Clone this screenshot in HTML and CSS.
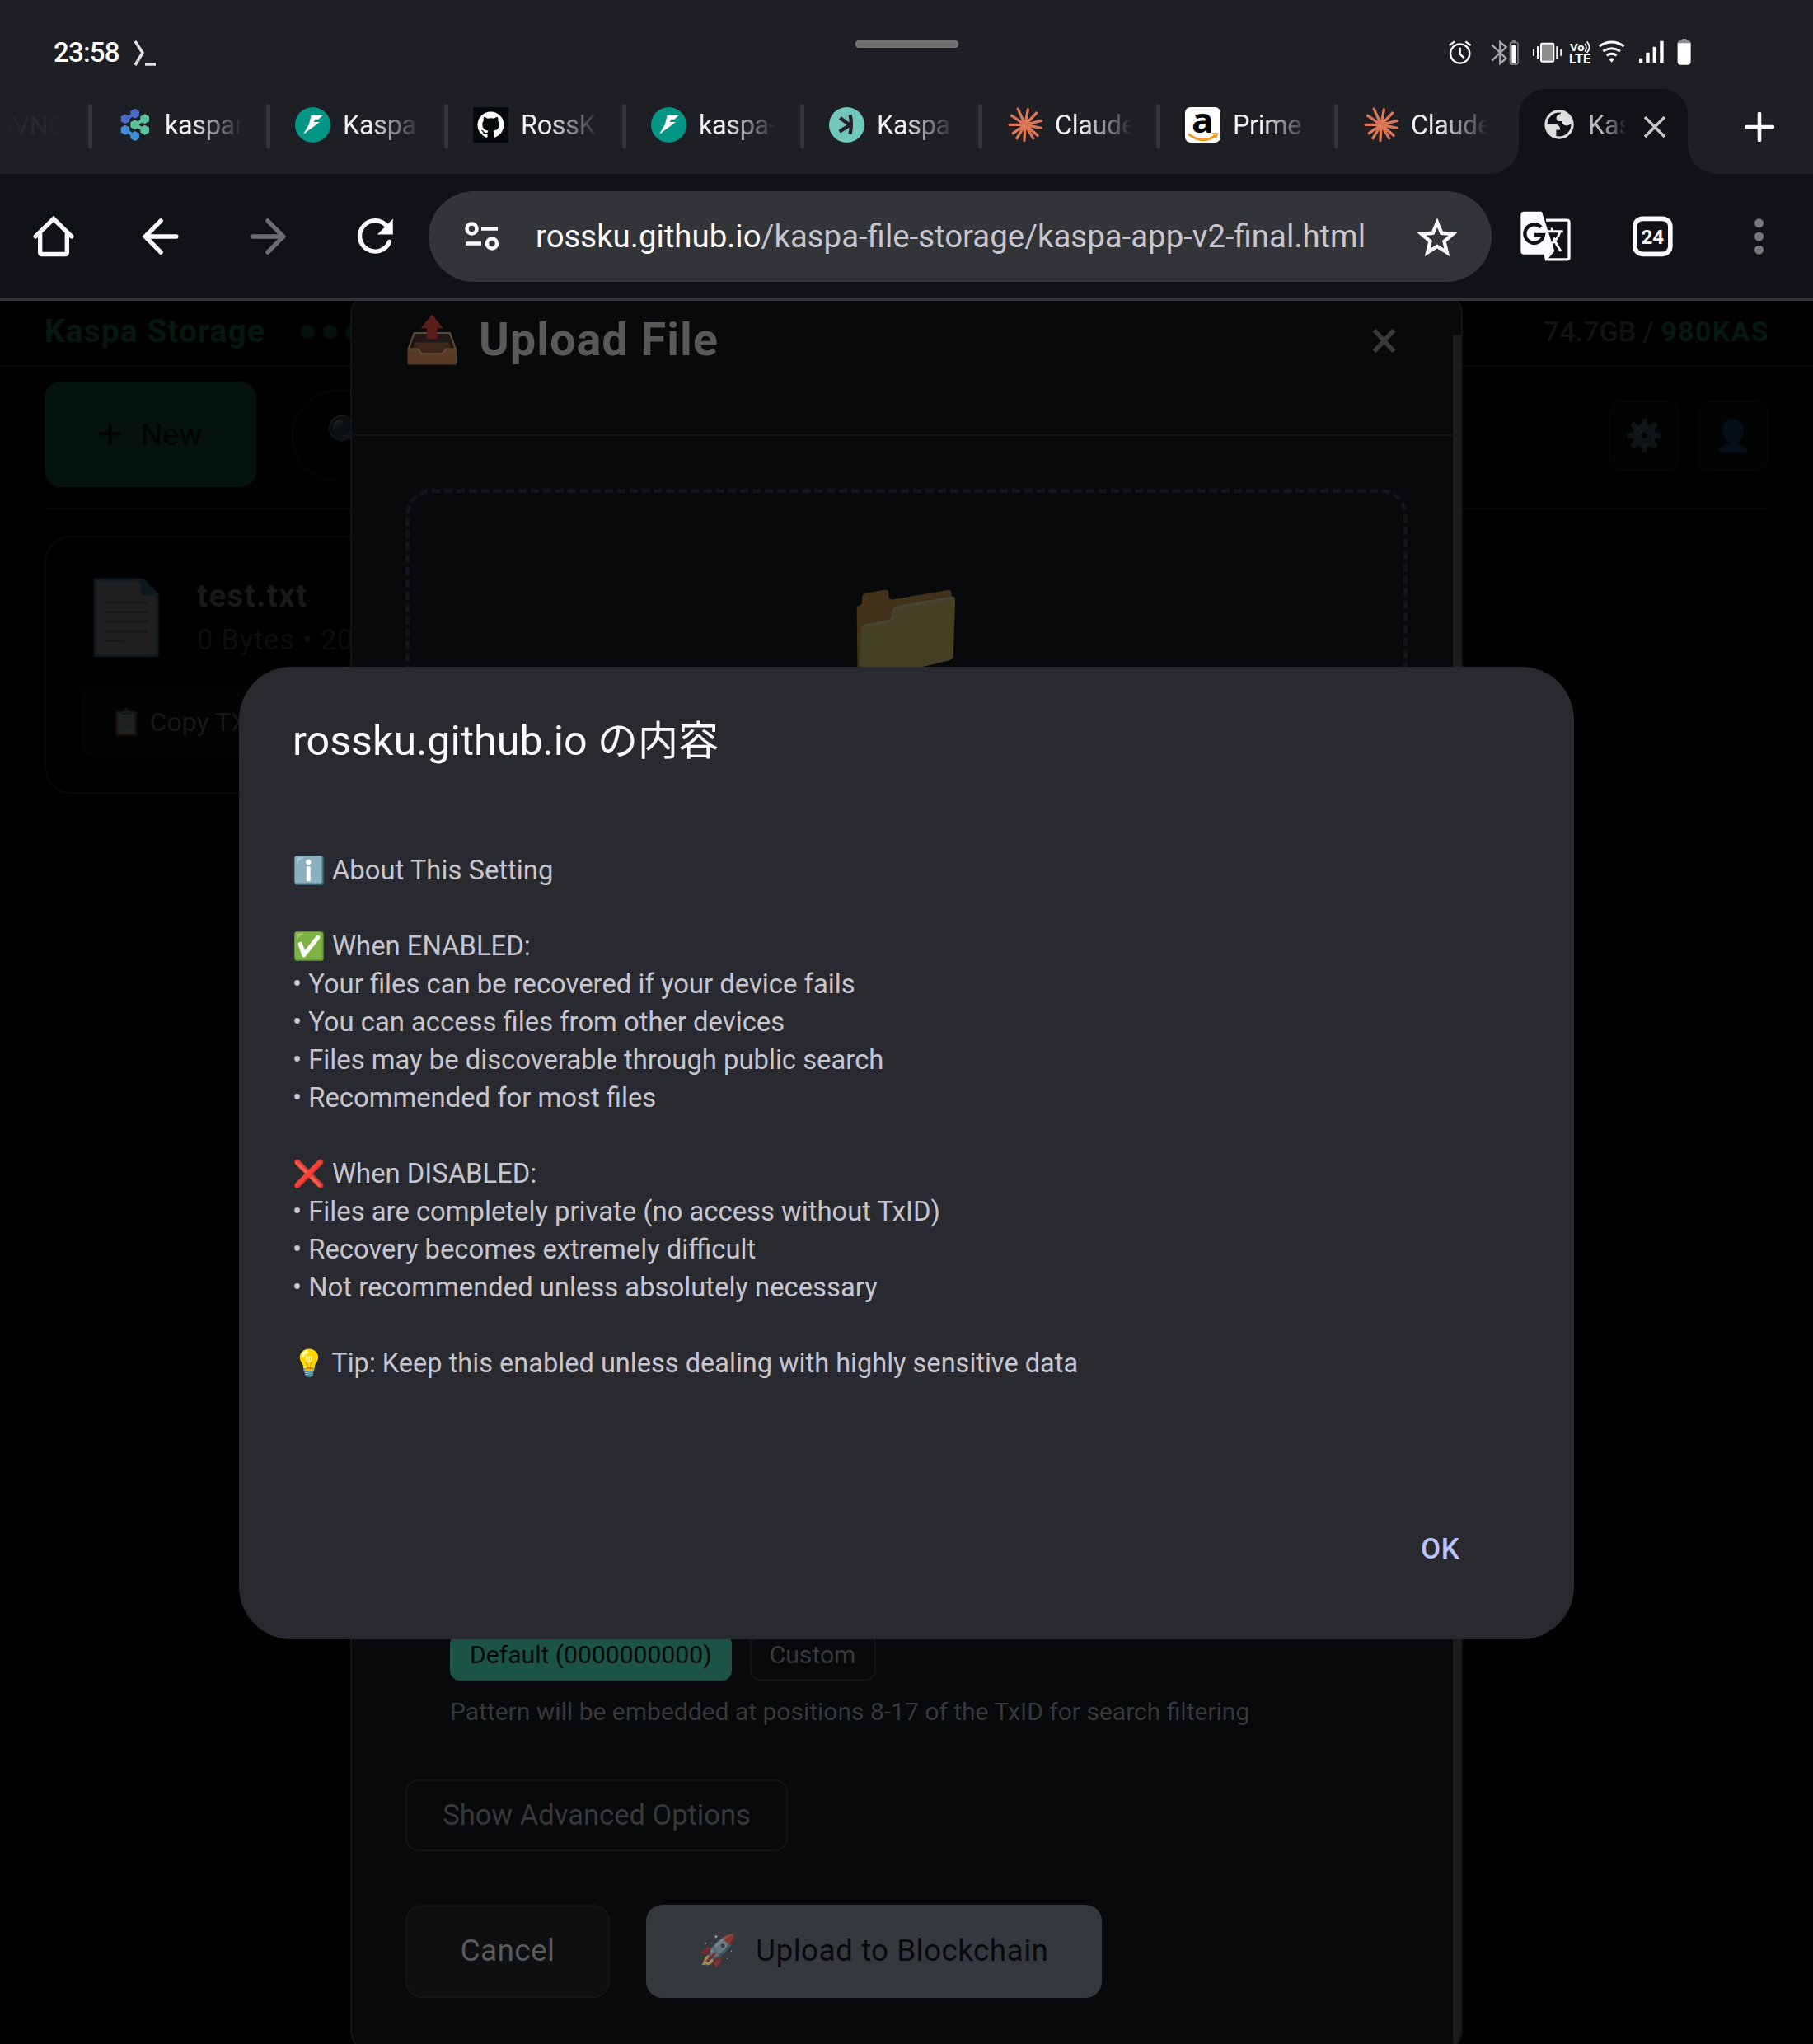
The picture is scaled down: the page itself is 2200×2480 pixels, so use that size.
FILE: index.html
```html
<!DOCTYPE html>
<html lang="ja">
<head>
<meta charset="utf-8">
<title>Kaspa Storage</title>
<link rel="stylesheet" href="styles.css">
</head>
<body>
<svg class="defs" width="0" height="0" aria-hidden="true">
  <symbol id="bolt" viewBox="1074 57 129 129">
    <circle cx="1138.500" cy="121.500" r="64.500" fill="#049587"/>
    <path fill="#fff" d="M1133 86h42l-16 15h-13l-4 10h22l-60 45 21-37z"/>
  </symbol>
  <symbol id="claude" viewBox="726 57 129 129">
    <g stroke="#d97757" stroke-width="10" stroke-linecap="round" fill="none">
      <path d="M792 121L766 64M792 121L802 66M792 121L833 78M792 121L850 106M792 121L850 133M792 121L837 160M792 121L821 170M792 121L789 178M792 121L762 170M792 121L748 152M792 121L735 121M792 121L743 88"/>
    </g>
    <circle cx="792" cy="121" r="18" fill="#d97757"/>
  </symbol>
</svg>

<header class="chrome">
  <div class="statusbar">
    <div class="clock"><span class="time">23:58</span>
      <svg class="term" viewBox="0 0 30 34"><path d="M3 2l9 14-9 15" stroke="#e0e0e3" stroke-width="3.500" fill="none"/><path d="M15 30h13" stroke="#e0e0e3" stroke-width="3.500"/></svg>
    </div>
    <div class="handle"></div>
    <svg class="sysicons" viewBox="40 40 910 120">
      <g fill="none" stroke="#fff" stroke-width="7">
        <circle cx="96" cy="106" r="35"/><path d="M96 84v24l15 14M57 76l19-14M135 76l-19-14"/>
      </g>
      <path d="M212 74l52 50-22 18V64l22 18-52 50" fill="none" stroke="#a9a9ac" stroke-width="7"/>
      <rect x="278" y="66" width="29" height="79" rx="5" fill="none" stroke="#8a8a8d" stroke-width="4"/><rect x="285" y="57" width="15" height="7" fill="#77777a"/><rect x="284" y="76" width="17" height="63" fill="#fff"/>
      <rect x="391" y="69" width="46" height="66" rx="4" fill="#8e8e91" stroke="#fff" stroke-width="6"/>
      <path d="M379 80v44M364 90v24M449 80v44M464 90v24" stroke="#fff" stroke-width="6"/>
      <text x="496" y="98" class="vo" textLength="53" lengthAdjust="spacingAndGlyphs">Vo</text><text x="493" y="142" class="lte" textLength="79" lengthAdjust="spacingAndGlyphs">LTE</text>
      <path d="M551 70q9 14 0 29M558 62q18 20 0 41" fill="none" stroke="#fff" stroke-width="5"/>
      <g fill="none" stroke="#fff" stroke-width="9"><path d="M603 79q45-30 90 0M617 97q31-20 62 0M630 113q18-12 36 0"/></g>
      <path d="M638 126q10-7 20 0l-10 12z" fill="#fff"/>
      <path d="M748 123h13v16h-13zM773 102h13v37h-13zM798 81h13v58h-13zM824 60h13v79h-13z" fill="#fff"/>
      <path d="M888 70q0-12 12-12h4v-6h16v6h4q12 0 12 12z" fill="#8e8e91"/><path d="M888 68h48v67q0 12-12 12h-24q-12 0-12-12z" fill="#fff"/>
    </svg>
  </div>

  <nav class="tabs">
    <div class="tab-gone">oVNC</div>
    <div class="tab"><svg class="fav" viewBox="426 57 129 129">
      <g stroke-width="12"><path d="M456 101l35-21" stroke="#4a69c8"/><path d="M456 141l35 21" stroke="#3f8fd6"/><path d="M527 101l-36 20 36 20" stroke="#5cc09d" fill="none"/></g>
      <g fill="#4a69c8"><path d="M491 62l16 9v18l-16 9-16-9V71z"/><path d="M456 82l16 9v18l-16 9-16-9V91z"/></g>
      <g fill="#3f8fd6"><path d="M456 122l16 9v18l-16 9-16-9v-18z"/><path d="M491 144l16 9v18l-16 9-16-9v-18z"/></g>
      <g fill="#5cc09d"><path d="M491 103l16 9v18l-16 9-16-9v-18zM527 82l16 9v18l-16 9-16-9V91zM527 122l16 9v18l-16 9-16-9v-18z"/></g>
      </svg><span class="label">kaspar</span></div>
    <div class="tab"><svg class="fav"><use href="#bolt"/></svg><span class="label">Kaspa</span></div>
    <div class="tab"><svg class="fav" viewBox="0 0 43 43"><rect width="43" height="43" fill="#070a0c"/>
      <path fill="#fff" transform="translate(5.500 5.500) scale(2)" d="M8 0C3.580 0 0 3.580 0 8c0 3.540 2.290 6.530 5.470 7.590.4.070.55-.17.55-.38 0-.19-.01-.82-.01-1.490-2.010.37-2.530-.49-2.690-.94-.09-.23-.48-.94-.82-1.130-.28-.15-.68-.52-.01-.53.63-.01 1.080.58 1.230.82.72 1.210 1.870.87 2.330.66.07-.52.28-.87.51-1.070-1.780-.2-3.640-.89-3.640-3.950 0-.87.31-1.590.82-2.150-.08-.2-.36-1.020.08-2.120 0 0 .67-.21 2.200.82.64-.18 1.320-.27 2-.27s1.360.09 2 .27c1.530-1.040 2.200-.82 2.200-.82.44 1.100.16 1.920.08 2.120.51.56.82 1.270.82 2.150 0 3.070-1.870 3.750-3.650 3.950.29.25.54.73.54 1.480 0 1.070-.01 1.930-.01 2.200 0 .21.15.46.55.38A8.010 8.010 0 0 0 16 8c0-4.420-3.580-8-8-8z"/></svg><span class="label">RossK</span></div>
    <div class="tab"><svg class="fav"><use href="#bolt"/></svg><span class="label">kaspa-</span></div>
    <div class="tab"><svg class="fav" viewBox="78 57 129 129"><circle cx="142.500" cy="121.500" r="64.500" fill="#70c7ba"/>
      <path d="M155 85q7 34 0 70M118 96l36 26-38 24" fill="none" stroke="#231f20" stroke-width="13"/></svg><span class="label">Kaspa</span></div>
    <div class="tab"><svg class="fav"><use href="#claude"/></svg><span class="label">Claude</span></div>
    <div class="tab"><svg class="fav" viewBox="1374 57 129 129"><rect x="1374" y="57" width="129" height="129" rx="20" fill="#fff"/>
      <text x="1398" y="149" class="amz" textLength="80" lengthAdjust="spacingAndGlyphs">a</text><path d="M1386 155q52 40 100 4" fill="none" stroke="#f7981d" stroke-width="9"/><path d="M1472 154q17-4 19-1 1 7-7 18" fill="none" stroke="#f7981d" stroke-width="5"/></svg><span class="label">Prime</span></div>
    <div class="tab"><svg class="fav"><use href="#claude"/></svg><span class="label">Claude</span></div>
    <div class="tab-active">
      <svg class="globe" viewBox="401 306 110 110"><circle cx="456" cy="361" r="49" fill="none" stroke="#dededf" stroke-width="10"/>
        <path fill="#dededf" d="M465 312q-2 10-12 13-9 4-7 15 2 9 12 9h10v8q8 10 20 8l15-7q2-36-38-46zM406 360h36q18 3 18 21h-15v29q-39-8-39-50z"/></svg>
      <span class="label short">Kas</span>
      <svg class="x" viewBox="0 0 28 28"><path d="M2 2l24 24M26 2L2 26" stroke="#c5c5c8" stroke-width="3.600"/></svg>
    </div>
    <svg class="plus" viewBox="0 0 36 36"><path d="M18 2v32M2 18h32" stroke="#fcf9ff" stroke-width="4.600" stroke-linecap="round"/></svg>
  </nav>

  <div class="toolbar">
    <svg class="tool" viewBox="97.500 430.500 198 198"><g fill="none" stroke="#fcf9ff" stroke-width="16" stroke-linecap="round"><path d="M131 529l65.500-64 65.500 64"/><path d="M147.500 520v67q0 7 7 7h84q7 0 7-7v-67"/></g></svg>
    <svg class="tool" viewBox="487.500 430.500 198 198"><path d="M587 472l-57 57.500 57 57.500M532 529.500h111" fill="none" stroke="#fcf9ff" stroke-width="16" stroke-linecap="round"/></svg>
    <svg class="tool" viewBox="877.500 430.500 198 198"><path d="M976 472l57 57.500-57 57.500M1031 529.500H920" fill="none" stroke="#6c6b70" stroke-width="16" stroke-linecap="round"/></svg>
    <svg class="tool" viewBox="1267.500 430.500 198 198"><path d="M1419 549a56 56 0 1 1-8-56" fill="none" stroke="#fcf9ff" stroke-width="16" stroke-linecap="round"/><path d="M1432 465v57h-57z" fill="#fcf9ff"/></svg>
    <div class="omnibox">
      <svg class="tune" viewBox="0 0 42 36"><g fill="none" stroke="#fcf9ff" stroke-width="4.600"><circle cx="8.500" cy="8.500" r="6"/><circle cx="33" cy="26.500" r="6"/><path d="M20 8.500h20M1 26.500h19"/></g></svg>
      <span class="url">rossku.github.io<span class="path">/kaspa-file-storage/kaspa-app-v2-final.html</span></span>
      <svg class="star" viewBox="0 0 48 46"><path d="M24 5l5.300 12.800 13.700 1.100-10.500 9 3.300 13.500L24 34l-11.800 7.400 3.300-13.500-10.500-9 13.700-1.100z" fill="none" stroke="#fcf9ff" stroke-width="4.400"/></svg>
    </div>
    <svg class="tool" viewBox="306 670.500 198 198">
      <path d="M408 710h76q8 0 8 8v127q0 8-8 8h-72" fill="none" stroke="#fcf9ff" stroke-width="10"/>
      <path d="M328 679h62q3 0 4 4l45 140-32 37-8-25h-71q-12 0-12-12V691q0-12 12-12z" fill="#fcf9ff"/>
      <path d="M390 736a34 34 0 1 0 9 27h-34" fill="none" stroke="#111217" stroke-width="13"/>
      <path d="M414 751h56M430 738v13M458 754q-8 28-34 44M436 774q8 24 26 49" fill="none" stroke="#fcf9ff" stroke-width="9"/>
    </svg>
    <svg class="tool" viewBox="696.500 670.500 198 198"><rect x="732" y="704.500" width="129" height="129" rx="28" fill="none" stroke="#fcf9ff" stroke-width="17"/><text x="796" y="795" class="count">24</text></svg>
    <svg class="tool" viewBox="1086 670.500 198 198"><g fill="#77767b"><circle cx="1183.500" cy="721" r="16.500"/><circle cx="1183.500" cy="769.500" r="16.500"/><circle cx="1183.500" cy="818" r="16.500"/></g></svg>
  </div>
</header>

<main class="viewport">
  <section class="app">
    <div class="topbar">
      <span class="brand">Kaspa Storage</span>
      <span class="dots"><i></i><i></i><i></i></span>
      <span class="usage">74.7GB / <b>980KAS</b></span>
    </div>
    <div class="actions">
      <button class="new"><svg class="newplus" viewBox="0 0 28 28"><path d="M14 0v28M0 14h28" stroke="#010202" stroke-width="4"/></svg><span>New</span></button>
      <div class="search"><span class="emoji">🔍</span></div>
      <div class="iconbtn"><span class="emoji">⚙️</span></div>
      <div class="iconbtn"><span class="emoji">👤</span></div>
    </div>
    <article class="file">
      <div class="filehead">
        <span class="emoji fileicon">📄</span>
        <div class="filemeta"><div class="filename">test.txt</div><div class="filesub">0 Bytes • 20</div></div>
      </div>
      <div class="copy"><span class="emoji">📋</span><span>Copy TX</span></div>
    </article>
  </section>

  <section class="modal">
    <div class="modalhead">
      <span class="emoji">📤</span><h2>Upload File</h2>
      <svg class="close" viewBox="0 0 29 31"><path d="M2.500 2.500l24 26M26.500 2.500l-24 26" stroke="#38393d" stroke-width="5.500"/></svg>
    </div>
    <div class="modalbody">
      <div class="drop"><span class="emoji">📁</span></div>
      <div class="pattern">
        <div class="chips"><span class="chip on">Default (0000000000)</span><span class="chip">Custom</span></div>
        <p class="hint">Pattern will be embedded at positions 8-17 of the TxID for search filtering</p>
      </div>
      <div class="advanced">Show Advanced Options</div>
      <div class="footer">
        <div class="btn cancel">Cancel</div>
        <div class="btn upload"><span class="emoji">🚀</span><span>Upload to Blockchain</span></div>
      </div>
    </div>
    <div class="scroll"></div>
  </section>

  <section class="dialog">
    <h1>rossku.github.io <span class="ja">の内容</span></h1>
    <div class="message">
      <p><span class="emoji">ℹ️</span> About This Setting</p>
      <p class="gap"><span class="emoji">✅</span> When ENABLED:</p>
      <p>• Your files can be recovered if your device fails</p>
      <p>• You can access files from other devices</p>
      <p>• Files may be discoverable through public search</p>
      <p>• Recommended for most files</p>
      <p class="gap"><span class="emoji">❌</span> When DISABLED:</p>
      <p>• Files are completely private (no access without TxID)</p>
      <p>• Recovery becomes extremely difficult</p>
      <p>• Not recommended unless absolutely necessary</p>
      <p class="tip gap"><span class="emoji">💡</span> Tip: Keep this enabled unless dealing with highly sensitive data</p>
    </div>
    <div class="ok">OK</div>
  </section>
</main>
</body>
</html>
```
FILE: styles.css
```css
* { box-sizing: border-box; }
html, body { margin: 0; padding: 0; }
body {
  width: 2200px; height: 2480px; overflow: hidden;
  display: flex; flex-direction: column;
  background: #000; color: #fff;
  font-family: Roboto, "Noto Sans CJK JP", "Noto Color Emoji", sans-serif;
}
svg { display: block; flex: none; }
h1, h2, p { margin: 0; font-weight: 400; }
button { border: 0; font: inherit; }
.defs { position: absolute; }

.chrome { background: #1e1f24; flex: none; }
.statusbar { height: 108px; display: flex; }
.clock { width: 1038px; padding: 44px 0 0 65px; display: flex; gap: 16px; height: 84px; }
.time { font-size: 33px; line-height: 40px; font-weight: 500; letter-spacing: -.8px; }
.term { width: 30px; height: 34px; margin-top: 4px; }
.handle { width: 125px; height: 9px; margin-top: 49px; border-radius: 4px; background: #70706f; }
.sysicons { width: 303.300px; height: 40px; margin: 43.300px 0 0 590px; }
.vo { font: 700 40px Roboto, sans-serif; fill: #fff; }
.lte { font: 700 47px Roboto, sans-serif; fill: #fff; }

.tabs { height: 103px; display: flex; }
.tab-gone { width: 107px; flex: none; font-size: 32px; line-height: 88px; color: #2b2c31; text-indent: -3px; white-space: nowrap;
  -webkit-mask-image: linear-gradient(90deg, transparent 0, #000 35%, transparent 80%); mask-image: linear-gradient(90deg, transparent 0, #000 35%, transparent 80%); }
.tab { width: 216px; flex: none; display: flex; height: 86px; align-items: center; }
.tab::before { content: ""; width: 5px; height: 54px; margin-top: 4px; border-radius: 2px; background: #333438; }
.fav { width: 43px; height: 43px; margin: 0 15px 0 30px; }
.label {
  width: 94px; overflow: hidden; white-space: nowrap; margin-top: 2px;
  font-size: 32.500px; line-height: 44px; letter-spacing: -.4px; color: #f2f0f6;
  -webkit-mask-image: linear-gradient(90deg, #000 35%, transparent 100%);
  mask-image: linear-gradient(90deg, #000 35%, transparent 100%);
}
.amz { font: 700 122px "Open Sans", sans-serif; fill: #000; }
.tab-active {
  width: 205px; height: 103px; margin-left: 8px; flex: none; position: relative;
  display: flex; padding: 25px 0 0 31px; background: #111217; border-radius: 32px 32px 0 0;
}
.tab-active::before, .tab-active::after {
  content: ""; position: absolute; bottom: 0; width: 35px; height: 35px;
}
.tab-active::before { left: -35px; background: radial-gradient(circle at 0 0, transparent 34.500px, #111217 35px); }
.tab-active::after { right: -35px; background: radial-gradient(circle at 100% 0, transparent 34.500px, #111217 35px); }
.globe { width: 36px; height: 36px; }
.label.short { width: 47px; margin: -3px 0 0 17px; color: #b9b8bd; }
.x { width: 28px; height: 28px; margin: 7px 0 0 20px; }
.plus { width: 36px; height: 36px; margin: 28px 0 0 69px; }

.toolbar { height: 154px; display: flex; align-items: center; background: #111217; border-bottom: 3px solid #333438; }
.tool { width: 66px; height: 66px; margin: 0 32px; }
.omnibox { width: 1290px; height: 110px; border-radius: 55px; background: #333438; display: flex; align-items: center; flex: none; }
.tune { width: 42px; height: 36px; margin-left: 44px; }
.url { width: 1032px; margin-left: 44px; font-size: 38.400px; white-space: nowrap; color: #fcf9ff; }
.path { color: #c7c5d0; }
.star { width: 48px; height: 46px; margin-left: 38px; margin-top: 3px; }
.count { font: 700 72px Roboto, sans-serif; fill: #fcf9ff; text-anchor: middle; }

.viewport { position: relative; flex: 1; overflow: hidden; background: #000; }

.topbar { height: 80px; padding: 0 54px; display: flex; align-items: center; border-bottom: 2px solid #080909; }
.brand { font-size: 39px; font-weight: 700; letter-spacing: 1px; color: #06190f; margin-top: -4px; }
.dots { display: flex; gap: 10px; margin-left: 43px; margin-top: -4px; }
.dots i { width: 17px; height: 17px; border-radius: 50%; background: #03130c; }
.usage { margin-left: auto; margin-right: -1px; font-size: 34px; color: #131314; font-weight: 500; margin-top: -4px; }
.usage b { color: #051a13; font-weight: 700; letter-spacing: 1.300px; }
.actions { margin: 0 54px; height: 173px; padding-bottom: 8px; border-bottom: 2px solid #080808; display: flex; align-items: center; }
.new { width: 257px; height: 128px; border-radius: 20px; background: #04130f; color: #010202; font-size: 37.500px; display: flex; align-items: center; justify-content: center; gap: 24px; padding: 0; }
.newplus { width: 27px; height: 27px; }
.search { width: 900px; height: 112px; margin: 4px auto 0 43px; border: 2px solid #050606; border-radius: 56px; padding-left: 40px; display: flex; align-items: center; }
.search .emoji { font-size: 42px; opacity: .12; margin-top: -4px; }
.iconbtn { width: 86px; height: 86px; margin: 4px 0 0 22px; border: 2px solid #050706; border-radius: 16px; background: #020303; display: flex; align-items: center; justify-content: center; font-size: 37px; }
.iconbtn .emoji { opacity: .1; }
.file { margin: 32px 54px; width: 900px; height: 313px; border: 2px solid #070808; border-radius: 32px; padding: 43px; }
.filehead { display: flex; height: 138px; }
.fileicon { font-size: 87px; line-height: 108px; width: 140px; opacity: .12; white-space: nowrap; }
.filename { font-size: 38px; line-height: 56px; font-weight: 700; letter-spacing: 1.600px; color: #191919; }
.filesub { font-size: 34.500px; line-height: 51px; letter-spacing: .8px; color: #0e0e0f; }
.copy { width: 300px; height: 86px; border: 2px solid #040605; border-radius: 16px; background: #020303; display: flex; align-items: center; padding-left: 33px; gap: 9px; font-size: 32px; color: #171818; }
.copy .emoji { font-size: 31px; opacity: .12; }

.modal { position: absolute; left: 425px; top: -11px; width: 1350px; height: 2137px; background: #07090b; border: 2px solid #121418; border-radius: 28px; overflow: hidden; }
.modalhead { height: 173px; border-bottom: 2px solid #121418; padding: 0 79px 59px 63px; display: flex; align-items: center; }
.modalhead .emoji { font-size: 55px; opacity: .35; width: 91px; white-space: nowrap; }
.modalhead h2 { font-size: 56px; line-height: 66px; font-weight: 700; letter-spacing: .9px; color: #595959; }
.close { width: 29px; height: 31px; margin-left: auto; margin-top: 3px; }
.modalbody { padding: 64px 65px; }
.drop { height: 600px; border: 5px dashed #14151c; border-radius: 32px; padding-top: 102px; text-align: center; font-size: 129px; line-height: 130px; }
.drop .emoji { opacity: .25; }
.pattern { margin-top: 790px; padding-left: 54px; }
.chips { display: flex; gap: 22px; }
.chip { height: 56px; padding: 0 22px; border: 2px solid #131519; border-radius: 12px; font-size: 30.100px; line-height: 46px; color: #36383d; }
.chip.on { background: #1b5346; border-color: #1b5346; color: #04090a; }
.hint { font-size: 30px; line-height: 40px; margin-top: 18px; color: #36383c; white-space: nowrap; }
.advanced { width: 464px; height: 87px; margin-top: 62px; border: 2px solid #131519; border-radius: 16px; font-size: 34.500px; line-height: 82px; text-align: center; color: #36383c; white-space: nowrap; }
.footer { display: flex; gap: 44px; margin-top: 65px; }
.btn { height: 113px; padding-bottom: 2px; border-radius: 20px; display: flex; align-items: center; justify-content: center; font-size: 37px; letter-spacing: .4px; white-space: nowrap; }
.cancel { width: 248px; background: #0d0f11; border: 2px solid #131519; color: #5a5a5a; }
.upload { width: 553px; background: #35383d; color: #090a0d; gap: 22px; }
.upload .emoji { font-size: 37px; opacity: .5; }
.scroll { position: absolute; right: -2px; top: 50px; width: 12px; height: 2090px; background: #1b1c1b; }

.dialog { position: absolute; left: 290px; top: 444px; width: 1620px; height: 1180px; border-radius: 64px; background: #292a2f; padding: 58px 65px; }
.dialog h1 { font-size: 50.200px; line-height: 64px; color: #fcf9ff; white-space: nowrap; }
.ja { font-size: 49px; }
.message { margin-top: 101px; font-size: 32.800px; line-height: 46px; color: #c7c5d0; white-space: nowrap; }
.message p { height: 46px; }
.message .emoji { font-size: 32px; }
.message .tip { font-size: 32.550px; }
.message .gap { margin-top: 46px; }
.ok { position: absolute; left: 1434px; top: 1051px; font-size: 35px; line-height: 40px; font-weight: 500; letter-spacing: .6px; color: #b8c4ff; }
```
